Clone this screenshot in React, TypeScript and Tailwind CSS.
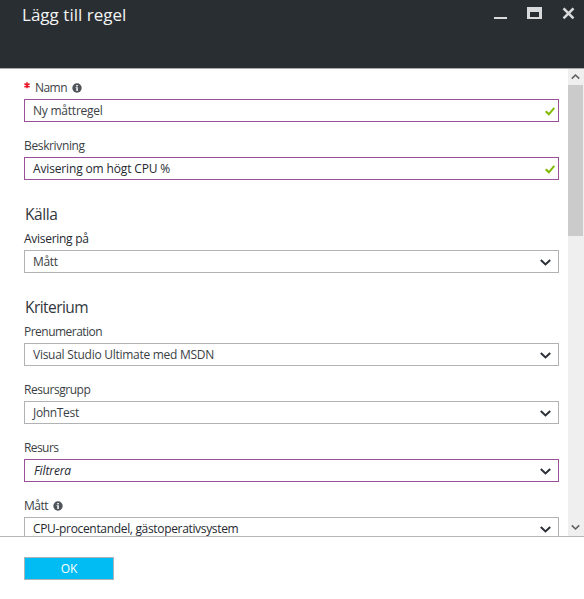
import type { ReactNode } from 'react';

function InfoIcon() {
  return (
    <svg className="ml-[5px] h-[10px] w-[10px] shrink-0" viewBox="0 0 10 10">
      <circle cx="5" cy="5" r="4.7" fill="#4f545a" />
      <rect x="4.2" y="2" width="1.6" height="1.4" fill="#fff" />
      <path d="M3.6 4.2h2.2v3.8H4.3V5h-.7z" fill="#fff" />
    </svg>
  );
}

function CheckIcon() {
  return (
    <svg className="mr-[3px] mt-px h-[9px] w-[10px] shrink-0" viewBox="0 0 10 9">
      <path d="M0.7 4.2L3.9 7.3L9.3 0.8" fill="none" stroke="#7fba00" strokeWidth="2.1" />
    </svg>
  );
}

function ChevronIcon() {
  return (
    <svg className="mr-[7px] mt-[2px] h-[7px] w-[11px] shrink-0" viewBox="0 0 11 7">
      <path d="M0.8 1L5.5 5.4L10.2 1" fill="none" stroke="#2b2f36" strokeWidth="2" />
    </svg>
  );
}

type FieldProps = {
  label: string;
  labelClass?: string;
  value: string;
  valueClass?: string;
  active?: boolean;
  required?: boolean;
  info?: boolean;
  icon: ReactNode;
};

function Field({ label, labelClass = '', value, valueClass = '', active, required, info, icon }: FieldProps) {
  return (
    <div className="mb-[15px] shrink-0">
      <div className="flex h-5 items-center pb-[3px] leading-[17px]">
        {required && (
          <svg className="mr-[5px] -mt-[5px] h-[7px] w-[6px]" viewBox="0 0 6 7">
            <path d="M3 .3v6M.4 1.6l5.2 3.5M5.6 1.6L.4 5.1" stroke="#e81123" strokeWidth="1.6" />
          </svg>
        )}
        <span className={`whitespace-nowrap ${labelClass}`}>{label}</span>
        {info && <InfoIcon />}
      </div>
      <div className={`flex h-[23px] items-center justify-between border pl-2 ${active ? 'border-[#9b4f96]' : 'border-[#b0b2b4]'}`}>
        <span className={`whitespace-nowrap leading-[17px] ${valueClass}`}>{value}</span>
        {icon}
      </div>
    </div>
  );
}

function Section({ children, className = '' }: { children: string; className?: string }) {
  return (
    <h2 className={`h-[35px] shrink-0 pl-px pt-[8px] text-[15.5px] leading-[22px] text-[#32363d] ${className}`}>
      {children}
    </h2>
  );
}

export default function App() {
  return (
    <div className="flex h-[599px] w-[584px] flex-col overflow-hidden bg-white font-['Open_Sans','Noto_Sans',sans-serif] text-[12px] text-[#3b3f45]">
      <header className="flex h-[69px] shrink-0 items-start justify-between border-b border-[#a8aaac] bg-[#292e32]">
        <h1 className="ml-[22px] mt-[4px] text-[17px] leading-[22px] tracking-[0.02px] text-[#f3f3f3]">Lägg till regel</h1>
        <svg className="mr-[8px] mt-[6px] h-[14px] w-[82px]" viewBox="0 0 82 14">
          <path d="M0 11h13v2H0z" fill="#d9dadb" />
          <path d="M33 1h15v12H33zM36 6v5h9V6z" fillRule="evenodd" fill="#d9dadb" />
          <path d="M69.5 2.3L79.5 12.3M79.5 2.3L69.5 12.3" stroke="#d9dadb" strokeWidth="2.6" />
        </svg>
      </header>

      <div className="flex h-[467px] shrink-0 overflow-hidden">
        <main className="ml-6 mr-[9px] flex w-[535px] shrink-0 flex-col pt-[10px]">
          <Field label="Namn" labelClass="tracking-[-0.55px]" value="Ny måttregel" valueClass="tracking-[-0.23px] -mt-px" required info active icon={<CheckIcon />} />
          <Field label="Beskrivning" labelClass="tracking-[-0.36px]" value="Avisering om högt CPU %" valueClass="tracking-[-0.15px] -mt-px text-[#25292f]" active icon={<CheckIcon />} />
          <Section className="tracking-[-0.45px]">Källa</Section>
          <Field label="Avisering på" labelClass="tracking-[-0.28px] text-[#25292f]" value="Mått" valueClass="tracking-[-0.3px]" icon={<ChevronIcon />} />
          <Section className="tracking-[-0.55px]">Kriterium</Section>
          <Field label="Prenumeration" labelClass="tracking-[-0.52px]" value="Visual Studio Ultimate med MSDN" valueClass="tracking-[-0.27px]" icon={<ChevronIcon />} />
          <Field label="Resursgrupp" labelClass="tracking-[-0.45px]" value="JohnTest" valueClass="tracking-[-0.33px]" icon={<ChevronIcon />} />
          <Field label="Resurs" labelClass="tracking-[-0.58px]" value="Filtrera" valueClass="italic pl-px tracking-[-0.12px] text-[#25292f]" active icon={<ChevronIcon />} />
          <Field label="Mått" labelClass="tracking-[-0.5px]" value="CPU-procentandel, gästoperativsystem" valueClass="tracking-[-0.33px] text-[#25292f]" info icon={<ChevronIcon />} />
        </main>
        <div className="flex w-4 shrink-0 flex-col items-start bg-[#efefef]">
          <svg className="h-4 w-[15px] shrink-0" viewBox="0 0 15 16">
            <path d="M3.8 9.6L7.5 6L11.2 9.6" fill="none" stroke="#606060" strokeWidth="1.6" />
          </svg>
          <div className="h-[151px] w-[15px] shrink-0 bg-[#cbcbcb]" />
          <svg className="mt-auto h-4 w-[15px] shrink-0" viewBox="0 0 15 16">
            <path d="M3.8 5.4L7.5 9L11.2 5.4" fill="none" stroke="#606060" strokeWidth="1.6" />
          </svg>
        </div>
      </div>

      <footer className="grow border-t border-[#b4b6b8] pl-6 pt-5">
        <button className="block h-[23px] w-[90px] border border-[#a9b4ba] bg-[#00bcf2] text-[12px] leading-[21px] tracking-[-0.2px] text-white">OK</button>
      </footer>
    </div>
  );
}
